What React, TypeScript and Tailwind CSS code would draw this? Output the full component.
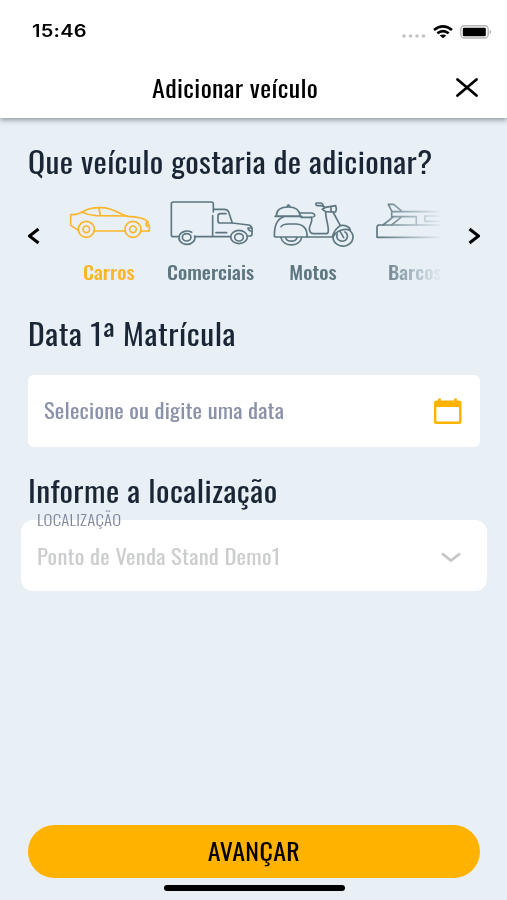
import { useState } from "react";
import type { ReactNode } from "react";

const CarIcon = () => (
  <svg width="100" height="60" viewBox="-3 0 300 180" fill="none" stroke="currentColor" strokeWidth="5" strokeLinejoin="round" strokeLinecap="round">
    <path d="M54 120L32 106V74L48 73C62 70 70 64 84 58C100 52 130 51 150 57C170 63 185 75 202 79C230 80 254 84 262 94L268 110V123H243" />
    <path d="M104 123H194M64 66C78 72 88 76 108 77L202 78M117 55L121 77M264 95C256 97 256 106 263 110" />
    <circle cx="79" cy="118" r="24" />
    <circle cx="79" cy="118" r="10" />
    <circle cx="219" cy="118" r="24" />
    <circle cx="219" cy="118" r="10" />
  </svg>
);

const TruckIcon = () => (
  <svg width="100" height="60" viewBox="3 0 300 180" fill="none" stroke="currentColor" strokeWidth="5" strokeLinejoin="round" strokeLinecap="round">
    <path d="M160 66V42Q160 36 154 36H40Q34 36 34 42V134Q34 140 40 140H54M158 77V140M104 140H212M162 58H192Q203 58 206 66L217 99L266 105Q276 107 276 118V132Q276 138 270 138H262" />
    <path d="M198 71H181Q174 71 174 78V92Q174 99 181 99H217M168 128H200M276 114H264Q264 122 276 124" />
    <path d="M95 127A24 20 0 1 0 104 138" />
    <ellipse cx="80" cy="142" rx="13" ry="11" />
    <ellipse cx="237" cy="141" rx="25" ry="20" />
    <ellipse cx="237" cy="142" rx="13" ry="11" />
  </svg>
);

const ScooterIcon = () => (
  <svg width="100" height="60" viewBox="-6 0 300 180" fill="none" stroke="currentColor" strokeWidth="5" strokeLinejoin="round" strokeLinecap="round">
    <path d="M34 78C34 60 48 51 70 51S104 60 106 78ZM30 79H110M67 48Q70 41 74 48" />
    <path d="M106 69H138Q150 70 149 78Q147 82 138 82H108M54 82C36 88 28 106 28 138Q28 141 34 141H126C128 116 114 102 92 102H70Q54 102 48 110" />
    <path d="M138 82C146 92 134 102 133 116Q134 131 146 131H184Q190 130 190 122C190 104 182 84 182 68" />
    <path d="M126 141H202C206 126 216 112 226 107L204 66M226 107C242 104 256 112 256 122C240 112 214 122 204 141" />
    <path d="M182 52L198 49V66L182 65L172 58ZM198 49L212 47Q216 57 212 66L198 66M182 52L168 47H156Q150 43 154 39H168Q174 41 176 49" />
    <path d="M48 143C54 172 104 172 110 143M62 143C66 157 92 157 96 143" />
    <path d="M204 142A30 27 0 1 0 256 123" />
    <path d="M217 132A16 15 0 1 0 240 126M224 122L236 143" />
  </svg>
);

const BoatIcon = () => (
  <svg width="100" height="60" viewBox="0 0 300 180" fill="none" stroke="currentColor" strokeWidth="5" strokeLinejoin="round" strokeLinecap="round">
    <path d="M81 65L70 43H86L112 65M260 65H80V80H154V105M86 80L54 105M108 82L80 105M260 78H180V94H260" />
    <path d="M260 105H42Q36 106 36 112V142H260" />
  </svg>
);

const VEHICLES: { label: string; icon: () => ReactNode }[] = [
  { label: "Carros", icon: CarIcon },
  { label: "Comerciais", icon: TruckIcon },
  { label: "Motos", icon: ScooterIcon },
  { label: "Barcos", icon: BoatIcon },
];

function StatusBar() {
  return (
    <div className="flex h-[60px] items-center justify-between pl-8 pr-[15px] pt-[3px]">
      <span className="origin-left scale-x-[1.18] font-[Inter] text-[17px] font-semibold tracking-[0.2px]">15:46</span>
      <div className="flex items-center gap-[7px]">
        <svg width="24" height="20" viewBox="0 0 24 20" fill="#c4c4c4">
          <circle cx="2" cy="14" r="1.8" />
          <circle cx="8.5" cy="14" r="1.8" />
          <circle cx="15" cy="14" r="1.8" />
          <circle cx="21.5" cy="14" r="1.8" />
        </svg>
        <svg width="20" height="14" viewBox="0 0 20 14" fill="none" stroke="#000" strokeWidth="2.6">
          <path d="M1 5Q10 -2.2 19 5M4.3 8.3Q10 3.8 15.7 8.3" />
          <path d="M6.8 10.6Q10 8.2 13.2 10.6L10 13.2Z" fill="#000" stroke="none" />
        </svg>
        <svg width="32" height="14" viewBox="0 0 32 14">
          <rect x="0.8" y="0.8" width="27.4" height="12.2" rx="3.5" fill="none" stroke="#b5b5b5" strokeWidth="1.4" />
          <rect x="2.8" y="2.8" width="23" height="8.4" rx="1.2" />
          <path d="M29.6 4.8Q33 7 29.6 9.2Z" fill="#b5b5b5" />
        </svg>
      </div>
    </div>
  );
}

export default function App() {
  const [selected, setSelected] = useState("Carros");

  return (
    <div className="flex h-[900px] w-[507px] flex-col overflow-hidden bg-[#e8f0f6] font-[Oswald,'Roboto_Condensed',sans-serif] text-[#1a2536]">
      {/* Header */}
      <header className="h-[118px] bg-white text-black shadow-[0_2px_5px_rgba(60,80,80,0.55)]">
        <StatusBar />
        <div className="flex h-[56px] items-center pl-[152px] pr-[27px]">
          <h1 className="origin-left scale-x-[1.13] text-[23px] leading-none tracking-[0.32px]">Adicionar veículo</h1>
          <button className="ml-auto" aria-label="Fechar">
            <svg width="26" height="22" viewBox="0 0 26 22" stroke="#000" strokeWidth="2.8" strokeLinecap="round">
              <path d="M3.5 2.5L22.5 18.5M22.5 2.5L3.5 18.5" />
            </svg>
          </button>
        </div>
      </header>

      <main className="flex flex-1 flex-col pl-7 pr-[27px]">
        <h2 className="mt-[24px] w-fit origin-left scale-x-[1.13] whitespace-nowrap text-[28px] leading-10 tracking-[0.3px]">
          Que veículo gostaria de adicionar?
        </h2>

        {/* Vehicle type carousel */}
        <div className="mt-[8px] flex h-[100px]">
          <button className="flex w-[30px] shrink-0 items-start pt-[37px]" aria-label="Anterior">
            <svg width="12" height="18" viewBox="0 0 12 18" fill="none" stroke="#000" strokeWidth="3">
              <path d="M10.5 2L1.5 9L10.5 16" />
            </svg>
          </button>
          <div className="flex w-[382px] shrink-0 overflow-hidden [mask-image:linear-gradient(to_right,#000_320px,transparent_385px)]">
            {VEHICLES.map(({ label, icon: Icon }) => (
              <button
                key={label}
                onClick={() => setSelected(label)}
                className={`flex w-[102px] shrink-0 flex-col items-center ${
                  selected === label ? "text-[#fbb52b]" : "text-[#5d7680]"
                }`}
              >
                <Icon />
                <span className="mt-[8px] scale-x-[1.13] text-[18px] font-medium leading-7">{label}</span>
              </button>
            ))}
          </div>
          <button className="flex flex-1 items-start justify-end pt-[37px]" aria-label="Seguinte">
            <svg width="12" height="18" viewBox="0 0 12 18" fill="none" stroke="#000" strokeWidth="3">
              <path d="M1.5 2L10.5 9L1.5 16" />
            </svg>
          </button>
        </div>

        {/* Registration date */}
        <h2 className="mt-[24px] w-fit origin-left scale-x-[1.13] text-[28px] leading-10 tracking-[0.5px]">
          Data 1ª Matrícula
        </h2>
        <div className="mt-[21px] flex h-[72px] items-center justify-between rounded-md bg-white pl-4 pr-[18px]">
          <span className="mb-[3px] origin-left scale-x-[1.13] text-[20px] leading-7 tracking-[0.15px] text-[#8a91a8]">
            Selecione ou digite uma data
          </span>
          <svg width="29" height="27" viewBox="0 0 29 27">
            <path fill="#ffb300" fillRule="evenodd" d="M3 2.5H5V0.5H8V2.5H21V0.5H24V2.5H26Q28.5 2.5 28.5 5V23.5Q28.5 26 26 26H3.5Q1 26 1 23.5V5Q1 2.5 3 2.5ZM3.4 9V23.6H26V9Z" />
          </svg>
        </div>

        {/* Location */}
        <h2 className="mt-[24px] w-fit origin-left scale-x-[1.13] text-[28px] leading-10 tracking-[0.38px]">
          Informe a localização
        </h2>
        <div className="relative -mx-[7px] mt-[9px] flex h-[71px] items-center justify-between rounded-xl bg-white pl-4 pr-[26px]">
          <span className="absolute left-4 top-[-11px] origin-left scale-x-[1.13] text-[15px] font-light leading-5 tracking-[0.15px] text-[#7f879c]">
            LOCALIZAÇÃO
          </span>
          <span className="origin-left scale-x-[1.13] text-[20px] leading-7 tracking-[0.2px] text-[#cbcdce]">
            Ponto de Venda Stand Demo1
          </span>
          <svg className="mt-[4px]" width="20" height="11" viewBox="0 0 20 11" fill="none" stroke="#c4c6c7" strokeWidth="2.8">
            <path d="M1 1.5L10 8.5L19 1.5" />
          </svg>
        </div>

        <button className="mt-auto h-[53px] w-full rounded-full bg-[#ffb300] leading-none text-black">
          <span className="inline-block scale-x-[1.13] text-[23px] tracking-[0.3px]">AVANÇAR</span>
        </button>
        <div className="mx-auto mb-[9px] mt-[7px] h-[6px] w-[181px] rounded-full bg-black" />
      </main>
    </div>
  );
}
